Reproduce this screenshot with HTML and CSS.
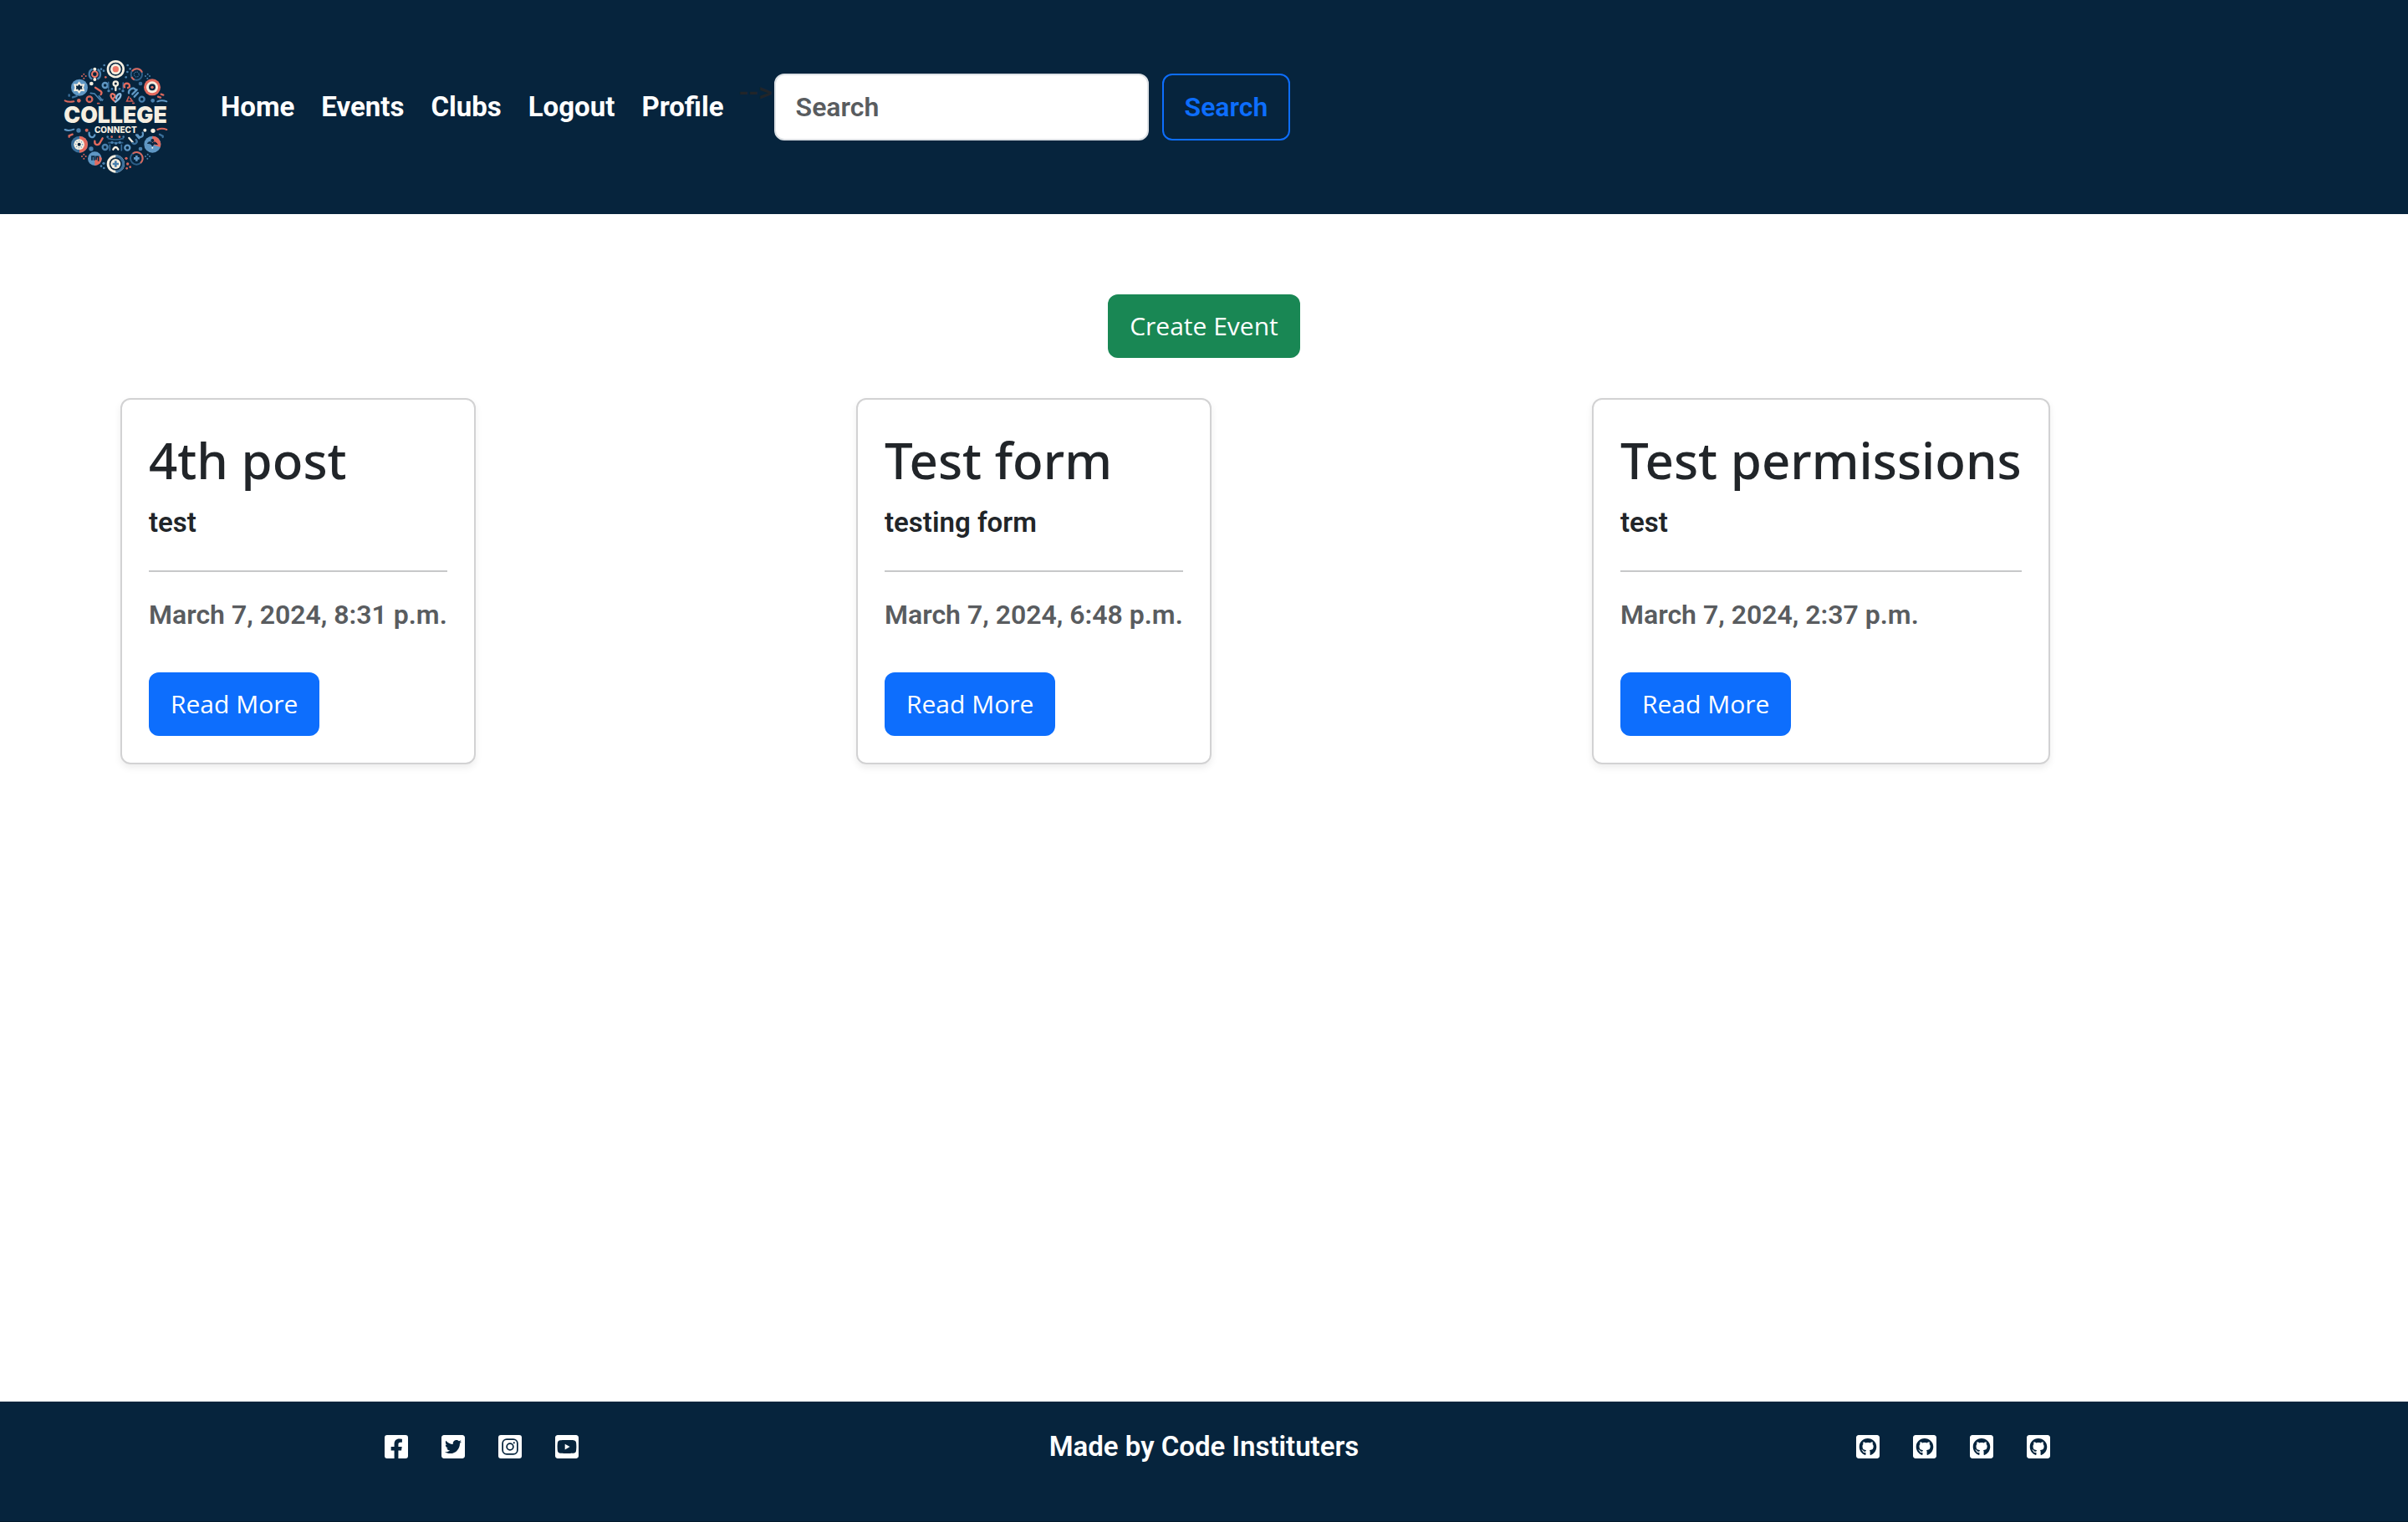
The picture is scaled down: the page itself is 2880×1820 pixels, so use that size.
FILE: index.html
```html
<!DOCTYPE html>
<html lang="en">
<head>
  <meta charset="utf-8">
  <meta name="viewport" content="width=device-width, initial-scale=1">
  <title>College Connect</title>
  <link rel="stylesheet" href="styles.css">
</head>
<body>
  <header class="site-header">
    <a class="logo" href="#" aria-label="College Connect">
      <svg viewBox="0 0 540 540" aria-hidden="true">
        <!-- top half of the ring -->
        <circle cx="265" cy="98" r="32" fill="#f6efe1"/><circle cx="265" cy="98" r="24" fill="#0a2740"/><circle cx="265" cy="98" r="19" fill="#f6efe1"/><circle cx="265" cy="98" r="11" fill="#ee7768"/>
        <circle cx="190" cy="116" r="20" fill="none" stroke="#4a80ad" stroke-width="7" stroke-dasharray="44 19" stroke-dashoffset="22"/><circle cx="190" cy="116" r="10" fill="none" stroke="#ee7768" stroke-width="6"/><circle cx="190" cy="98" r="6" fill="#f6efe1"/><circle cx="190" cy="135" r="6" fill="#f6efe1"/>
        <circle cx="340" cy="117" r="20" fill="none" stroke="#2d5f88" stroke-width="6"/><path d="M324 106a20 20 0 0 1 36 4M322 126a20 20 0 0 0 10 10" fill="none" stroke="#d8675c" stroke-width="6"/><circle cx="340" cy="117" r="9" fill="none" stroke="#3b6f9b" stroke-width="4" stroke-dasharray="4 3"/>
        <circle cx="135" cy="164" r="30" fill="#5f97c4"/><path d="M134 147l6 8 10-1-3 10 3 10-10-1-6 8-6-8-10 1 3-10-3-10 10 1z" fill="#0a2740" stroke="#f6efe1" stroke-width="6"/>
        <circle cx="396" cy="163" r="30" fill="#e36a5d"/><circle cx="396" cy="163" r="21" fill="#f6efe1"/><circle cx="396" cy="163" r="12" fill="#0a2740"/><circle cx="396" cy="163" r="5" fill="#ee7768"/>
        <circle cx="178" cy="150" r="7" fill="#f6efe1"/><circle cx="354" cy="150" r="7" fill="#3b6f9b"/>
        <!-- inner figures above the name -->
        <g fill="none" stroke-width="7" stroke-linecap="round">
          <circle cx="227" cy="156" r="9" stroke="#5f97c4"/><path d="M239 145v22M292 147v20" stroke="#3b6f9b" stroke-width="5"/>
          <circle cx="265" cy="150" r="8" stroke="#f6efe1"/><path d="M265 160v14" stroke="#f6efe1"/>
          <path d="M297 163c-8-16 20-20 18-2l-6 4" stroke="#e36a5d"/>
          <path d="M192 164l18 12q8 6 2 13" stroke="#e36a5d"/><path d="M175 184l14 2 22 24 8-3M205 194l12 16" stroke="#4a80ad" stroke-width="5"/>
          <circle cx="171" cy="206" r="10" stroke="#d8675c"/>
          <path d="M312 184c-2-14 18-24 24-12M325 188l16-16M332 197l13-14" stroke="#5f97c4"/><circle cx="359" cy="206" r="9" stroke="#4a80ad"/>
          <path d="M312 197l-7 16h20l-8-11M200 221l6 0M326 220h5" stroke="#c95c55" stroke-width="5"/>
          <path d="M264 215c-24-18-17-32-8-28 8 3 9 10 3 14" stroke="#ee7768"/><path d="M264 215c25-16 22-34 11-27-6 4-8 8-8 15" stroke="#8dbbe0"/>
          <path d="M83 211q12 7 32 3M415 315q16-7 33 0" stroke="#d8675c" stroke-width="6"/>
          <path d="M415 214q16-7 33 0M83 315q12 6 32-1" stroke="#5f97c4" stroke-width="6"/>
          <path d="M98 190v4M111 199l14-4" stroke="#3b6f9b"/><path d="M428 188l8 3M417 197l9 3M98 341v-4l12-5" stroke="#d8675c"/><path d="M434 342v-4l-11-6" stroke="#3b6f9b"/>
        </g>
        <g fill="#4a80ad"><circle cx="240" cy="176" r="5"/><circle cx="252" cy="169" r="4"/><circle cx="279" cy="169" r="4"/><circle cx="291" cy="176" r="5"/><circle cx="224" cy="84" r="4"/><circle cx="213" cy="98" r="4"/><circle cx="222" cy="104" r="4"/><circle cx="308" cy="84" r="4"/><circle cx="317" cy="97" r="4"/><circle cx="307" cy="108" r="4"/><circle cx="302" cy="127" r="4"/><circle cx="398" cy="211" r="7"/><circle cx="132" cy="318" r="8"/><circle cx="372" cy="123" r="3"/><circle cx="380" cy="116" r="3"/><circle cx="387" cy="123" r="3"/><circle cx="379" cy="131" r="3"/></g>
        <g fill="#d8675c"><circle cx="133" cy="211" r="7"/><circle cx="161" cy="317" r="6"/><circle cx="144" cy="123" r="3"/><circle cx="151" cy="116" r="3"/><circle cx="158" cy="123" r="3"/><circle cx="151" cy="131" r="3"/><circle cx="229" cy="127" r="4"/></g>
        <text class="logo-name" x="264" y="290" text-anchor="middle">COLLEGE</text>
        <text class="logo-sub" x="265" y="327" text-anchor="middle">CONNECT</text>
        <circle cx="370" cy="317" r="6" fill="#f6efe1"/><circle cx="399" cy="319" r="8" fill="#f6efe1"/>
        <!-- inner figures below the name -->
        <g fill="none" stroke-width="7" stroke-linecap="round">
          <path d="M170 326c-2 18 16 22 20 8M362 326c6 16-14 22-18 8M349 346l-10-12" stroke="#5f97c4"/>
          <path d="M190 356c-2 16 14 18 20 4l8-14" stroke="#e36a5d"/><path d="M313 345l13 15" stroke="#f6efe1"/><path d="M326 363c10 8 20-4 12-12" stroke="#3b6f9b"/>
          <path d="M238 347q27 8 54 0M240 362h50" stroke="#2d5f88" stroke-width="5"/>
          <circle cx="227" cy="378" r="9" stroke="#4a80ad"/><circle cx="307" cy="380" r="9" stroke="#5f97c4"/><path d="M244 370v19M286 370v19" stroke="#3b6f9b" stroke-width="5"/><path d="M256 386q9-16 18 0" stroke="#f6efe1"/>
        </g>
        <g fill="#4a80ad"><circle cx="236" cy="341" r="4"/><circle cx="293" cy="341" r="4"/><circle cx="252" cy="361" r="5"/><circle cx="266" cy="364" r="5"/><circle cx="280" cy="361" r="5"/><circle cx="177" cy="384" r="8"/><circle cx="354" cy="384" r="7"/><circle cx="222" cy="436" r="5"/><circle cx="213" cy="446" r="4"/><circle cx="223" cy="453" r="4"/><circle cx="372" cy="411" r="3"/><circle cx="380" cy="404" r="3"/><circle cx="387" cy="411" r="3"/><circle cx="379" cy="419" r="3"/></g>
        <g fill="#d8675c"><circle cx="251" cy="341" r="4"/><circle cx="279" cy="341" r="4"/><circle cx="144" cy="411" r="3"/><circle cx="151" cy="404" r="3"/><circle cx="158" cy="411" r="3"/><circle cx="151" cy="419" r="3"/><circle cx="303" cy="418" r="5"/><circle cx="308" cy="438" r="5"/><circle cx="317" cy="449" r="4"/><circle cx="305" cy="454" r="4"/></g>
        <!-- bottom half of the ring -->
        <circle cx="135" cy="368" r="30" fill="#3b6f9b"/><path d="M135 338a30 30 0 0 1 0 60z" fill="#e36a5d"/><circle cx="134" cy="368" r="19" fill="#f6efe1"/><circle cx="134" cy="368" r="12" fill="none" stroke="#5f97c4" stroke-width="4" stroke-dasharray="3 6"/><circle cx="134" cy="368" r="6" fill="#0a2740"/>
        <circle cx="397" cy="368" r="30" fill="#5f97c4"/><path d="M397 338a30 30 0 0 1 28 40l-28-10z" fill="#e36a5d"/><path d="M379 364q8-10 18 0 10-10 18 4l-12-2-6 8-6-8z" fill="#0a2740" stroke="#0a2740" stroke-width="3"/><circle cx="397" cy="354" r="6" fill="#0a2740"/><circle cx="397" cy="380" r="3" fill="#f6efe1"/>
        <circle cx="190" cy="419" r="25" fill="#5f97c4"/><path d="M190 444v-18q10-28 25-9a25 25 0 0 1-25 27z" fill="#e36a5d"/><path d="M180 425v-14h8v14M195 424v-12h8v16" fill="none" stroke="#0a2740" stroke-width="5"/>
        <circle cx="340" cy="418" r="22" fill="none" stroke="#2d5f88" stroke-width="6"/><path d="M326 401a22 22 0 0 1 28 34" fill="none" stroke="#d8675c" stroke-width="6"/><path d="M340 408v20M330 418h20" stroke="#5f97c4" stroke-width="8"/>
        <circle cx="265" cy="438" r="32" fill="#f6efe1"/><path d="M265 406a32 32 0 0 1 0 64z" fill="#3b6f9b"/><circle cx="265" cy="438" r="23" fill="#0a2740"/><circle cx="265" cy="438" r="18" fill="#f6efe1"/><path d="M265 427v22M254 438h22" stroke="#4a80ad" stroke-width="8"/>
      </svg>
    </a>
    <div class="header-tools">
      <nav class="main-nav" aria-label="Main">
        <a href="#">Home</a>
        <a href="#">Events</a>
        <a href="#">Clubs</a>
        <a href="#">Logout</a>
        <a href="#">Profile</a>
      </nav>
      <span class="stray">--&gt;</span>
      <form class="search-form" role="search">
        <input class="search-input" type="search" placeholder="Search" aria-label="Search">
        <button class="search-button" type="submit">Search</button>
      </form>
    </div>
  </header>

  <main class="content">
    <a class="btn btn-create" href="#">Create Event</a>
    <div class="events">
      <article class="card">
        <h2 class="card-title">4th post</h2>
        <p class="card-text">test</p>
        <hr class="card-rule">
        <p class="card-date">March 7, 2024, 8:31 p.m.</p>
        <a class="btn btn-read" href="#">Read More</a>
      </article>
      <article class="card">
        <h2 class="card-title">Test form</h2>
        <p class="card-text">testing form</p>
        <hr class="card-rule">
        <p class="card-date">March 7, 2024, 6:48 p.m.</p>
        <a class="btn btn-read" href="#">Read More</a>
      </article>
      <article class="card">
        <h2 class="card-title">Test permissions</h2>
        <p class="card-text">test</p>
        <hr class="card-rule">
        <p class="card-date">March 7, 2024, 2:37 p.m.</p>
        <a class="btn btn-read" href="#">Read More</a>
      </article>
    </div>
  </main>

  <footer class="site-footer">
    <ul class="icon-list">
      <li><a href="#" aria-label="Facebook"><svg class="icon" viewBox="0 0 448 512"><path d="M400 32H48A48 48 0 0 0 0 80v352a48 48 0 0 0 48 48h137.25V327.69h-63V256h63v-54.64c0-62.15 37-96.48 93.67-96.48 27.14 0 55.52 4.84 55.52 4.84v61h-31.27c-30.81 0-40.42 19.12-40.42 38.73V256h68.78l-11 71.69h-57.78V480H400a48 48 0 0 0 48-48V80a48 48 0 0 0-48-48z"/></svg></a></li>
      <li><a href="#" aria-label="Twitter"><svg class="icon" viewBox="0 0 448 512"><path d="M400 32H48C21.5 32 0 53.5 0 80v352c0 26.5 21.5 48 48 48h352c26.5 0 48-21.5 48-48V80c0-26.5-21.5-48-48-48zm-48.9 158.8c.2 2.8.2 5.7.2 8.5 0 86.7-66 186.6-186.6 186.6-37.2 0-71.7-10.8-100.7-29.4 5.3.6 10.4.8 15.8.8 30.7 0 58.9-10.4 81.4-28-28.8-.6-53-19.5-61.3-45.5 10.1 1.5 19.2 1.5 29.6-1.2-30-6.1-52.5-32.5-52.5-64.4v-.8c8.7 4.9 18.9 7.9 29.6 8.3a65.447 65.447 0 0 1-29.2-54.6c0-12.2 3.2-23.4 8.9-33.1 32.3 39.8 80.8 65.8 135.2 68.6-9.3-44.5 24-80.6 64-80.6 18.9 0 35.9 7.9 47.9 20.7 14.8-2.8 29-8.3 41.6-15.8-4.9 15.2-15.2 28-28.8 36.1 13.2-1.4 26-5.1 37.8-10.2-8.9 13.1-20.1 24.7-32.9 34z"/></svg></a></li>
      <li><a href="#" aria-label="Instagram"><svg class="icon" viewBox="0 0 448 512"><rect y="32" width="448" height="448" rx="48"/><g class="icon-line"><rect x="82" y="114" width="284" height="284" rx="78"/><circle cx="224" cy="256" r="62"/></g><circle class="icon-dot" cx="300" cy="180" r="18"/></svg></a></li>
      <li><a href="#" aria-label="YouTube"><svg class="icon" viewBox="0 0 448 512"><path d="M186.8 202.1l95.2 54.1-95.2 54.1V202.1zM448 80v352c0 26.5-21.5 48-48 48H48c-26.5 0-48-21.5-48-48V80c0-26.5 21.5-48 48-48h352c26.5 0 48 21.5 48 48zm-42 176.3s0-59.6-7.6-88.2c-4.2-15.8-16.5-28.2-32.2-32.4C337.9 128 224 128 224 128s-113.9 0-142.2 7.7c-15.7 4.2-28 16.6-32.2 32.4-7.6 28.5-7.6 88.2-7.6 88.2s0 59.6 7.6 88.2c4.2 15.8 16.5 27.7 32.2 31.9C110.1 384 224 384 224 384s113.9 0 142.2-7.7c15.7-4.2 28-16.1 32.2-31.9 7.6-28.5 7.6-88.1 7.6-88.1z"/></svg></a></li>
    </ul>
    <p class="credit">Made by Code Instituters</p>
    <ul class="icon-list">
      <li><a href="#" aria-label="GitHub"><svg class="icon" viewBox="0 0 448 512"><path id="github" d="M400 32H48C21.5 32 0 53.5 0 80v352c0 26.5 21.5 48 48 48h352c26.5 0 48-21.5 48-48V80c0-26.5-21.5-48-48-48zM277.3 415.7c-8.4 1.5-11.5-3.7-11.5-8 0-5.4.2-33 .2-55.3 0-15.6-5.2-25.5-11.3-30.7 37-4.1 76-9.2 76-73.1 0-18.2-6.5-27.3-17.1-39 1.7-4.3 7.4-22-1.7-45-13.9-4.3-45.7 17.9-45.7 17.9-13.2-3.7-27.5-5.6-41.6-5.6-14.1 0-28.4 1.9-41.6 5.6 0 0-31.8-22.2-45.7-17.9-9.1 22.9-3.5 40.6-1.7 45-10.6 11.7-15.6 20.8-15.6 39 0 63.6 37.3 69 74.3 73.1-4.8 4.3-9.1 11.7-10.6 22.3-9.5 4.3-33.8 11.7-48.3-13.9-9.1-15.8-25.5-17.1-25.5-17.1-16.2-.2-1.1 10.2-1.1 10.2 10.8 5 18.4 24.2 18.4 24.2 9.7 29.7 56.1 19.7 56.1 19.7 0 13.9.2 36.5.2 40.6 0 4.3-3 9.5-11.5 8-66-22.1-112.2-84.9-112.2-158.3 0-91.8 70.2-161.5 162-161.5S388 165.6 388 257.4c.1 73.4-44.7 136.3-110.7 158.3z"/></svg></a></li>
      <li><a href="#" aria-label="GitHub"><svg class="icon" viewBox="0 0 448 512"><use href="#github"/></svg></a></li>
      <li><a href="#" aria-label="GitHub"><svg class="icon" viewBox="0 0 448 512"><use href="#github"/></svg></a></li>
      <li><a href="#" aria-label="GitHub"><svg class="icon" viewBox="0 0 448 512"><use href="#github"/></svg></a></li>
    </ul>
  </footer>
</body>
</html>
```
FILE: styles.css
```css
:root {
  --navy: #06243d;
  --ink: #212529;
  --blue: #0d6efd;
  --green: #198754;
}

* {
  box-sizing: border-box;
}

body {
  margin: 0;
  min-height: 100vh;
  display: flex;
  flex-direction: column;
  background: #fff;
  color: var(--ink);
  font: 600 32px/48px Roboto, sans-serif;
}

h2,
p,
ul {
  margin: 0;
  padding: 0;
}

a {
  color: inherit;
  text-decoration: none;
}

/* Header */
.site-header {
  display: flex;
  align-items: flex-start;
  gap: 34px;
  padding: 50px 50px 26px;
  background: var(--navy);
}

.logo svg {
  display: block;
  width: 180px;
  height: 180px;
}

.logo-name,
.logo-sub {
  fill: #f6efe1;
  font-family: Inter, sans-serif;
}

.logo-name {
  font-size: 80px;
  font-weight: 900;
}

.logo-sub {
  font-size: 30px;
  font-weight: 800;
}

.header-tools {
  display: flex;
  align-items: center;
  margin-top: 38px;
}

.main-nav {
  display: flex;
  gap: 32px;
  color: #fff;
  font-size: 33px;
  font-weight: 700;
}

.stray {
  align-self: flex-start;
  margin: 0 2px 0 18px;
  line-height: 44px;
}

.search-form {
  display: flex;
  gap: 16px;
}

.search-input,
.search-button {
  height: 80px;
  border-radius: 12px;
  font: inherit;
}

.search-input {
  width: 448px;
  padding: 0 24px;
  border: 2px solid #dee2e6;
  background: #fff;
  color: var(--ink);
}

.search-input::placeholder {
  color: #595c5f;
  opacity: 1;
}

.search-button {
  padding: 0 25px;
  border: 2px solid var(--blue);
  background: transparent;
  color: var(--blue);
}

/* Events */
.content {
  flex: 1;
  display: flex;
  flex-direction: column;
  align-items: center;
  gap: 48px;
  padding: 96px 120px;
}

.btn {
  display: inline-block;
  padding: 14px 26px;
  border-radius: 12px;
  color: #fff;
  font: 400 30px/48px "Open Sans", sans-serif;
}

.btn-create {
  background: var(--green);
}

.btn-read {
  background: var(--blue);
}

.events {
  align-self: stretch;
  display: grid;
  grid-template-columns: repeat(3, 1fr);
  justify-items: start;
}

.card {
  margin: 0 24px;
  padding: 32px;
  border: 2px solid #d2d2d3;
  border-radius: 12px;
  box-shadow: 0 4px 8px rgba(0, 0, 0, 0.075);
}

.card-title {
  margin-bottom: 12px;
  font: 500 60px/80px "Noto Sans", sans-serif;
}

.card-text,
.card-date {
  line-height: 46px;
}

.card-text {
  font-size: 33px;
}

.card-rule {
  height: 2px;
  margin: 34px 0 28px;
  border: 0;
  background: #c7c8c9;
}

.card-date {
  margin-bottom: 46px;
  color: #595c5f;
}

/* Footer */
.site-footer {
  display: grid;
  grid-template-columns: repeat(3, 1fr);
  align-items: center;
  padding: 30px 120px 65px;
  border-bottom: 1px solid #03192b;
  background: var(--navy);
  color: #fff;
}

.icon-list {
  display: flex;
  justify-content: center;
  gap: 40px;
  padding-left: 32px;
  list-style: none;
}

.icon {
  display: block;
  width: 28px;
  height: 32px;
  fill: #fff;
}

.icon-line {
  fill: none;
  stroke: var(--navy);
  stroke-width: 28;
}

.icon-dot {
  fill: var(--navy);
}

.credit {
  font-size: 33px;
  text-align: center;
}
```
